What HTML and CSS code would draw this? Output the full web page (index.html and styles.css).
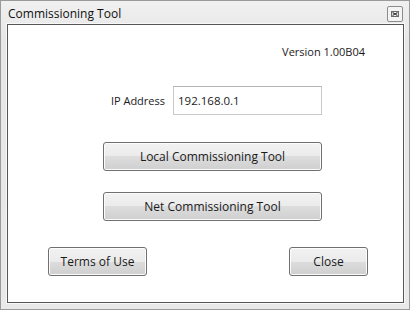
FILE: index.html
```html
<html>
<head>
<title>Commissioning Tool</title>
<link rel="stylesheet" href="styles.css">
</head>
<body>
<div class="window">
  <div class="titlebar">
    <span class="title">Commissioning Tool</span>
    <span class="closebox">
      <svg width="16" height="16" viewBox="0 0 16 16">
        <rect x="0.5" y="0.5" width="15" height="15" rx="1.5" fill="#f4f4f4" stroke="#8c8c8c" />
        <rect x="4.5" y="5.5" width="7" height="5" fill="#ffffff" stroke="#6a6a6a" />
        <path d="M5.5 6.5 L10.5 9.5 M10.5 6.5 L5.5 9.5" stroke="#3c3c3c" stroke-width="1.2" />
      </svg>
    </span>
  </div>
  <div class="client">
    <div class="version">Version 1.00B04</div>
    <div class="middle">
      <div class="iprow">
        <span class="label">IP Address</span>
        <input type="text" class="ipbox" value="192.168.0.1" />
      </div>
      <button class="btn wide">Local Commissioning Tool</button>
      <button class="btn wide net">Net Commissioning Tool</button>
    </div>
    <div class="bottom">
      <button class="btn terms">Terms of Use</button>
      <button class="btn close">Close</button>
    </div>
  </div>
</div>
</body>
</html>
```
FILE: styles.css
```css
body {
  margin: 0;
  font-family: "Open Sans", "Noto Sans", sans-serif;
  font-size: 11px;
  color: #1a1a1a;
}
.window {
  width: 410px;
  height: 310px;
  box-sizing: border-box;
  border: 1px solid #9a9a9a;
  background: linear-gradient(#f0f0f0, #e6e6e6 40px, #e9e9e9);
  display: flex;
  flex-direction: column;
}
.titlebar {
  height: 23px;
  display: flex;
  align-items: center;
  justify-content: space-between;
  padding: 0 6px 0 7px;
}
.title {
  font-size: 12px;
  color: #111;
  margin-top: 2px;
}
.closebox {
  height: 16px;
  margin-top: 3px;
}
.closebox svg {
  display: block;
}
.client {
  flex: 1;
  margin: 0 5px 6px 6px;
  border: 1px solid #555;
  box-shadow: 0 0 0 1px #f8f8f8;
  background: white;
  display: flex;
  flex-direction: column;
}
.version {
  margin-top: 19px;
  line-height: 16px;
  text-align: right;
  padding-right: 38px;
}
.middle {
  margin: 26px 0 0 95px;
  width: 219px;
  display: flex;
  flex-direction: column;
}
.iprow {
  display: flex;
  justify-content: flex-end;
  align-items: center;
  gap: 8px;
}
.ipbox {
  width: 149px;
  height: 29px;
  box-sizing: border-box;
  border: 1px solid #c8c8c8;
  border-top-color: #b4b4b4;
  padding: 0 4px;
  font: inherit;
  font-size: 11.5px;
  color: #1a1a1a;
  outline: none;
}
.btn {
  height: 29px;
  box-sizing: border-box;
  border: 1px solid #707070;
  border-radius: 3px;
  background: linear-gradient(#f2f2f2, #ebebeb 50%, #dddddd 50%, #cfcfcf);
  box-shadow: inset 0 0 0 1px #fcfcfc;
  font: inherit;
  font-size: 12px;
  color: #1a1a1a;
  padding: 0;
}
.wide {
  width: 219px;
  margin-top: 27px;
}
.net {
  margin-top: 21px;
}
.bottom {
  margin-top: 26px;
  display: flex;
  justify-content: space-between;
  padding: 0 35px 0 40px;
}
.terms {
  width: 99px;
}
.close {
  width: 79px;
}
```
